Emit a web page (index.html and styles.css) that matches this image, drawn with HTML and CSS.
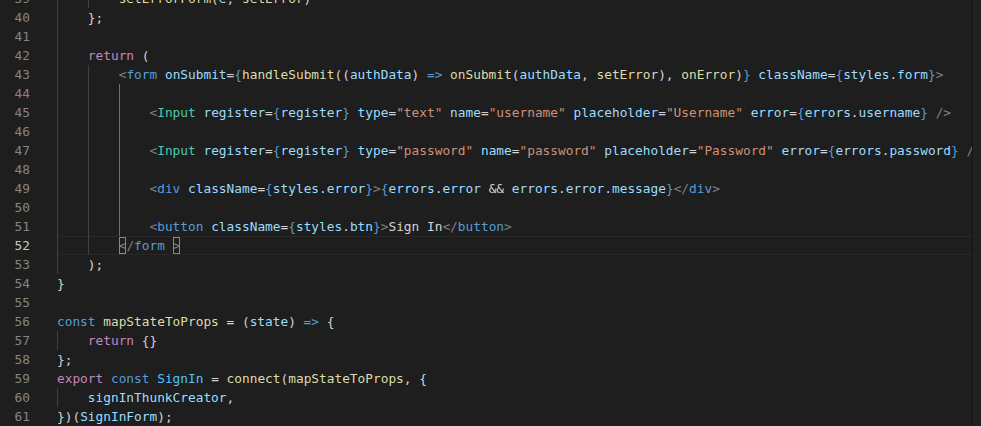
FILE: index.html
```html
<!DOCTYPE html>
<html lang="en">
<head>
    <meta charset="UTF-8">
    <title>SignIn.jsx</title>
    <link rel="stylesheet" href="styles.css">
</head>
<body>
    <div class="editor">
        <div class="lines">
            <div class="line"><span class="ln">39</span><span class="code"><span class="ig">    </span><span class="ig">    </span><span class="fn">setErrorForm</span>(<span class="at">e</span>, <span class="fn">setError</span>)</span></div>
            <div class="line"><span class="ln">40</span><span class="code"><span class="ig">    </span>};</span></div>
            <div class="line"><span class="ln">41</span><span class="code"><span class="ig">    </span></span></div>
            <div class="line"><span class="ln">42</span><span class="code"><span class="ig">    </span><span class="kw">return</span> (</span></div>
            <div class="line"><span class="ln">43</span><span class="code"><span class="ig">    </span><span class="ig">    </span><span class="tg">&lt;</span><span class="st">form</span> <span class="at">onSubmit</span>=<span class="st">{</span><span class="fn">handleSubmit</span>((<span class="at">authData</span>) <span class="st">=&gt;</span> <span class="fn">onSubmit</span>(<span class="at">authData</span>, <span class="fn">setError</span>), <span class="fn">onError</span>)<span class="st">}</span> <span class="at">className</span>=<span class="st">{</span><span class="at">styles</span>.<span class="at">form</span><span class="st">}</span><span class="tg">&gt;</span></span></div>
            <div class="line"><span class="ln">44</span><span class="code"><span class="ig">    </span><span class="ig">    </span><span class="ig act">    </span></span></div>
            <div class="line"><span class="ln">45</span><span class="code"><span class="ig">    </span><span class="ig">    </span><span class="ig act">    </span><span class="tg">&lt;</span><span class="cp">Input</span> <span class="at">register</span>=<span class="st">{</span><span class="at">register</span><span class="st">}</span> <span class="at">type</span>=<span class="s">"text"</span> <span class="at">name</span>=<span class="s">"username"</span> <span class="at">placeholder</span>=<span class="s">"Username"</span> <span class="at">error</span>=<span class="st">{</span><span class="at">errors</span>.<span class="at">username</span><span class="st">}</span> <span class="tg">/&gt;</span></span></div>
            <div class="line"><span class="ln">46</span><span class="code"><span class="ig">    </span><span class="ig">    </span><span class="ig act">    </span></span></div>
            <div class="line"><span class="ln">47</span><span class="code"><span class="ig">    </span><span class="ig">    </span><span class="ig act">    </span><span class="tg">&lt;</span><span class="cp">Input</span> <span class="at">register</span>=<span class="st">{</span><span class="at">register</span><span class="st">}</span> <span class="at">type</span>=<span class="s">"password"</span> <span class="at">name</span>=<span class="s">"password"</span> <span class="at">placeholder</span>=<span class="s">"Password"</span> <span class="at">error</span>=<span class="st">{</span><span class="at">errors</span>.<span class="at">password</span><span class="st">}</span> <span class="tg">/&gt;</span></span></div>
            <div class="line"><span class="ln">48</span><span class="code"><span class="ig">    </span><span class="ig">    </span><span class="ig act">    </span></span></div>
            <div class="line"><span class="ln">49</span><span class="code"><span class="ig">    </span><span class="ig">    </span><span class="ig act">    </span><span class="tg">&lt;</span><span class="st">div</span> <span class="at">className</span>=<span class="st">{</span><span class="at">styles</span>.<span class="at">error</span><span class="st">}</span><span class="tg">&gt;</span><span class="st">{</span><span class="at">errors</span>.<span class="at">error</span> &amp;&amp; <span class="at">errors</span>.<span class="at">error</span>.<span class="at">message</span><span class="st">}</span><span class="tg">&lt;/</span><span class="st">div</span><span class="tg">&gt;</span></span></div>
            <div class="line"><span class="ln">50</span><span class="code"><span class="ig">    </span><span class="ig">    </span><span class="ig act">    </span></span></div>
            <div class="line"><span class="ln">51</span><span class="code"><span class="ig">    </span><span class="ig">    </span><span class="ig act">    </span><span class="tg">&lt;</span><span class="st">button</span> <span class="at">className</span>=<span class="st">{</span><span class="at">styles</span>.<span class="at">btn</span><span class="st">}</span><span class="tg">&gt;</span>Sign In<span class="tg">&lt;/</span><span class="st">button</span><span class="tg">&gt;</span></span></div>
            <div class="line current"><span class="ln">52</span><span class="code"><span class="ig">    </span><span class="ig">    </span><span class="tg match">&lt;</span><span class="tg">/</span><span class="st">form</span> <span class="tg match">&gt;</span></span></div>
            <div class="line"><span class="ln">53</span><span class="code"><span class="ig">    </span>);</span></div>
            <div class="line"><span class="ln">54</span><span class="code">}</span></div>
            <div class="line"><span class="ln">55</span><span class="code"></span></div>
            <div class="line"><span class="ln">56</span><span class="code"><span class="st">const</span> <span class="fn">mapStateToProps</span> = (<span class="at">state</span>) <span class="st">=&gt;</span> {</span></div>
            <div class="line"><span class="ln">57</span><span class="code"><span class="ig">    </span><span class="kw">return</span> {}</span></div>
            <div class="line"><span class="ln">58</span><span class="code">};</span></div>
            <div class="line"><span class="ln">59</span><span class="code"><span class="kw">export</span> <span class="st">const</span> <span class="cn">SignIn</span> = <span class="fn">connect</span>(<span class="fn">mapStateToProps</span>, {</span></div>
            <div class="line"><span class="ln">60</span><span class="code"><span class="ig">    </span><span class="at">signInThunkCreator</span>,</span></div>
            <div class="line"><span class="ln">61</span><span class="code">})(<span class="at">SignInForm</span>);</span></div>
        </div>
        <div class="scrollbar"></div>
    </div>
</body>
</html>
```

FILE: styles.css
```css
html, body {
    margin: 0;
    padding: 0;
    background-color: #1e1e1e;
}

.editor {
    display: flex;
    height: 426px;
    overflow: hidden;
    background-color: #1e1e1e;
    font-family: "DejaVu Sans Mono", "Liberation Mono", monospace;
    font-size: 12.8px;
    line-height: 19px;
    color: #d4d4d4;
}

.lines {
    flex: 1;
    min-width: 0;
    margin-top: -11px;
}

.line {
    display: flex;
    height: 19px;
}

.ln {
    flex: 0 0 57px;
    box-sizing: border-box;
    padding-right: 27px;
    text-align: right;
    color: #858585;
}

.code {
    flex: 1;
    min-width: 0;
    white-space: pre;
    overflow: hidden;
}

.current .ln {
    color: #c6c6c6;
}

.current .code {
    box-shadow: inset 0 1px #282828, inset 0 -1px #282828;
}

/* indent guides */
.ig {
    display: inline-block;
    height: 19px;
    vertical-align: top;
    box-shadow: inset 1px 0 #404040;
}

.ig.act {
    box-shadow: inset 1px 0 #707070;
}

.match {
    display: inline-block;
    height: 17px;
    margin-top: 1px;
    line-height: 17px;
    vertical-align: top;
    box-shadow: inset 0 0 0 1px #888888;
}

.scrollbar {
    flex: 0 0 8px;
    border-left: 1px solid #161616;
    background-color: #212121;
}

/* token colours */
.kw { color: #c586c0; }
.st { color: #569cd6; }
.tg { color: #808080; }
.cp { color: #4ec9b0; }
.at { color: #9cdcfe; }
.s  { color: #ce9178; }
.fn { color: #dcdcaa; }
.cn { color: #4fc1ff; }
```
